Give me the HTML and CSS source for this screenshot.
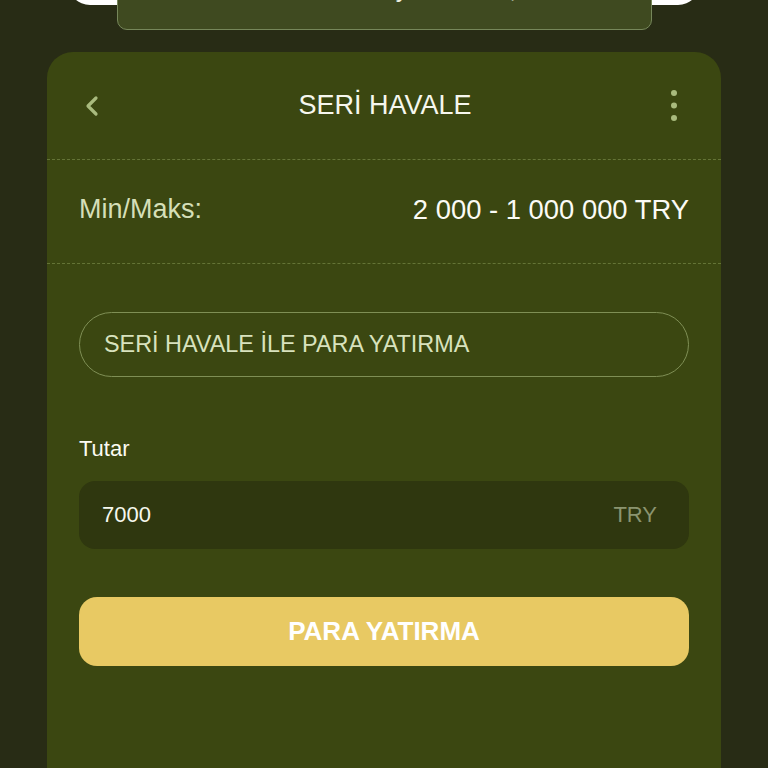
FILE: index.html
```html
<!DOCTYPE html>
<html lang="tr">
<head>
<meta charset="utf-8">
<title>Seri Havale</title>
<link rel="stylesheet" href="styles.css">
</head>
<body>
<div class="backsheet"></div>
<div class="toast"><span class="toast-text">Tutar hesabınıza yatırılacak, lütfen</span></div>
<main class="card">
  <header class="head">
    <button class="icon-btn" aria-label="Geri">
      <svg width="16" height="22" viewBox="0 0 16 22"><path d="M12 3 L4 11 L12 19" fill="none" stroke="#a9bb7e" stroke-width="3.2" stroke-linecap="round" stroke-linejoin="round"/></svg>
    </button>
    <h1 class="title">SERİ HAVALE</h1>
    <button class="icon-btn" aria-label="Menü">
      <svg width="8" height="34" viewBox="0 0 8 34"><circle cx="4" cy="4" r="3" fill="#a9bb7e"/><circle cx="4" cy="16.5" r="3" fill="#a9bb7e"/><circle cx="4" cy="29" r="3" fill="#a9bb7e"/></svg>
    </button>
  </header>
  <div class="limits">
    <span class="limits-label">Min/Maks:</span>
    <span class="limits-value">2 000 - 1 000 000 TRY</span>
  </div>
  <section class="form">
    <div class="method">SERİ HAVALE İLE PARA YATIRMA</div>
    <label class="field-label">Tutar</label>
    <div class="amount">
      <span class="amount-value">7000</span>
      <span class="amount-cur">TRY</span>
    </div>
    <button class="submit">PARA YATIRMA</button>
  </section>
</main>
</body>
</html>
```
FILE: styles.css
```css
* { box-sizing: border-box; }
html, body { margin: 0; padding: 0; }
body {
  background: #282c15;
  font-family: "Liberation Sans", Arial, sans-serif;
  height: 768px;
  overflow: hidden;
  position: relative;
}
.backsheet {
  position: absolute;
  left: 68px;
  top: -40px;
  width: 632px;
  height: 45px;
  background: #ffffff;
  border-radius: 22px;
}
.toast {
  position: absolute;
  left: 117px;
  top: -40px;
  width: 535px;
  height: 70px;
  background: #3f4a20;
  border: 1.5px solid #76875a;
  border-radius: 10px;
  display: flex;
  justify-content: flex-start;
  align-items: flex-end;
  overflow: hidden;
  padding-left: 84px;
}
.toast-text {
  color: #eef0e0;
  font-size: 25px;
  line-height: 26px;
  white-space: nowrap;
  margin-bottom: 28px;
}
.card {
  margin: 52px 47px 0;
  background: #3b4711;
  border-radius: 26px 26px 0 0;
  height: 716px;
}
.head {
  height: 108px;
  display: flex;
  align-items: center;
  justify-content: space-between;
  padding: 0 43px 0 37px;
  border-bottom: 1.5px dashed rgba(150, 170, 100, 0.45);
}
.icon-btn {
  background: none;
  border: 0;
  padding: 0;
  display: flex;
  align-items: center;
}
.title {
  margin: 0;
  font-weight: 400;
  font-size: 27px;
  color: #f6f7ee;
}
.limits {
  height: 104px;
  display: flex;
  align-items: center;
  justify-content: space-between;
  padding: 0 32px 4px;
  border-bottom: 1.5px dashed rgba(150, 170, 100, 0.45);
  font-size: 27px;
}
.limits-label { color: #d5dfb8; }
.limits-value { color: #fbfbf5; font-size: 27.4px; }
.form {
  padding: 48px 32px 0;
  display: flex;
  flex-direction: column;
}
.method {
  height: 65px;
  border: 1.5px solid #7f8f55;
  border-radius: 33px;
  display: flex;
  align-items: center;
  padding: 0 24px;
  color: #d8e2bd;
  font-size: 23.4px;
}
.field-label {
  margin-top: 59px;
  color: #fbfbf3;
  font-size: 22px;
  line-height: 26px;
}
.amount {
  margin-top: 19px;
  height: 68px;
  background: #2f370f;
  border-radius: 16px;
  display: flex;
  align-items: center;
  justify-content: space-between;
  padding: 0 32px 0 23px;
  font-size: 22px;
}
.amount-value { color: #f6f7ee; }
.amount-cur { color: #8b9470; }
.submit {
  margin-top: 48px;
  height: 69px;
  border: 0;
  border-radius: 18px;
  background: #e8c963;
  color: #ffffff;
  font-family: "Liberation Sans", Arial, sans-serif;
  font-weight: 700;
  font-size: 26px;
}
```
